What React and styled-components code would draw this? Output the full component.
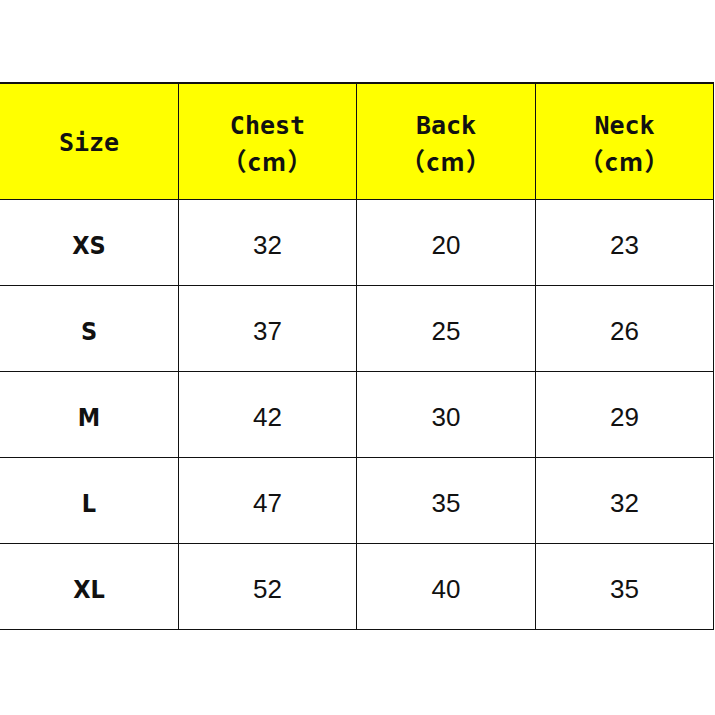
import React from 'react';
import styled, { createGlobalStyle } from 'styled-components';

const GlobalStyle = createGlobalStyle`
  html, body {
    margin: 0;
    padding: 0;
    background: #fff;
  }
`;

const columns = [
  { title: 'Size' },
  { title: 'Chest', unit: '（cm）' },
  { title: 'Back', unit: '（cm）' },
  { title: 'Neck', unit: '（cm）' },
];

const rows = [
  ['XS', '32', '20', '23'],
  ['S', '37', '25', '26'],
  ['M', '42', '30', '29'],
  ['L', '47', '35', '32'],
  ['XL', '52', '40', '35'],
];

const Page = styled.div`
  width: 715px;
  height: 715px;
  padding-top: 82px;
  box-sizing: border-box;
  background: #fff;
`;

const Table = styled.div`
  display: grid;
  grid-template-columns: 179px 178px 179px 178px;
  grid-template-rows: 116px repeat(5, 86px);
  width: 714px;
  border-top: 2px solid #111;
`;

const HeadCell = styled.div`
  box-sizing: border-box;
  display: flex;
  flex-direction: column;
  align-items: center;
  justify-content: center;
  background: #ffff00;
  border-right: 1px solid #111;
  border-bottom: 1px solid #111;
  color: #111;
  font-family: "DejaVu Sans Mono", "Liberation Mono", monospace;
  font-weight: bold;
  font-size: 25px;
  line-height: 34px;
  padding-top: 3px;
`;

const Unit = styled.span`
  font-family: "Noto Sans CJK SC", "DejaVu Sans Mono", sans-serif;
  font-weight: bold;
  font-size: 25px;
  line-height: 34px;
  letter-spacing: 1px;
`;

const Cell = styled.div`
  box-sizing: border-box;
  display: flex;
  align-items: center;
  justify-content: center;
  border-right: 1px solid #111;
  border-bottom: 1px solid #111;
  color: #111;
  font-family: ${p => (p.$size
    ? '"Liberation Sans Narrow", "DejaVu Sans Condensed", "Liberation Sans", sans-serif'
    : '"Liberation Sans", Arial, sans-serif')};
  font-weight: ${p => (p.$size ? 'bold' : 'normal')};
  font-size: ${p => (p.$size ? '25px' : '26px')};
  padding-top: 5px;
`;

export default function App() {
  return (
    <Page>
      <GlobalStyle />
      <Table>
        {columns.map(c => (
          <HeadCell key={c.title}>
            {c.title}
            {c.unit && <Unit>{c.unit}</Unit>}
          </HeadCell>
        ))}
        {rows.map(r =>
          r.map((v, i) => (
            <Cell key={r[0] + i} $size={i === 0}>{v}</Cell>
          ))
        )}
      </Table>
    </Page>
  );
}
